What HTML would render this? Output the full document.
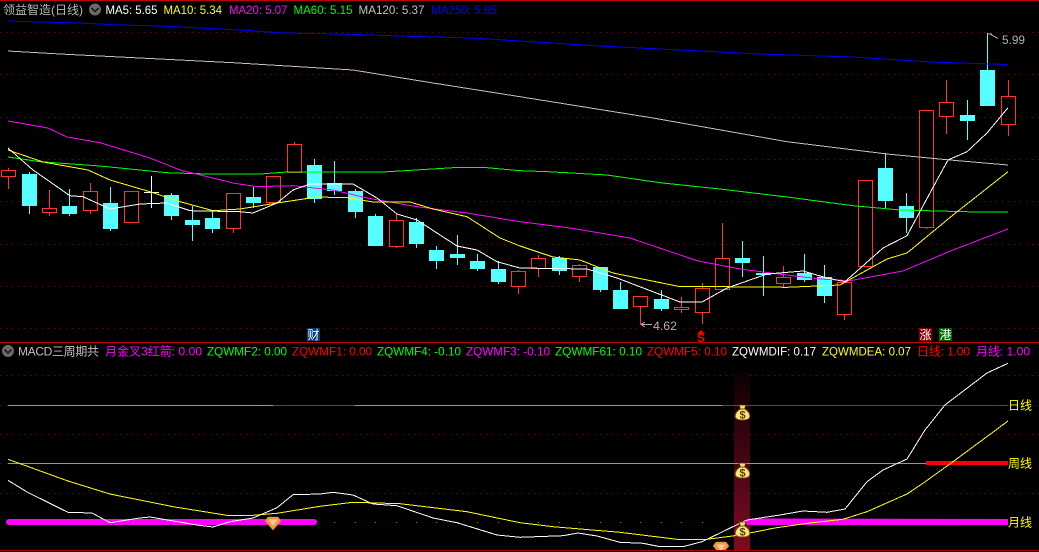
<!DOCTYPE html>
<html><head><meta charset="utf-8">
<style>
html,body{margin:0;padding:0;background:#000;width:1039px;height:552px;overflow:hidden}
svg{display:block}
text{font-family:"Liberation Sans","Noto Sans CJK SC",sans-serif;font-size:12px}
.l{fill:none;stroke-width:1;shape-rendering:crispEdges}
</style></head><body>
<svg width="1039" height="552" viewBox="0 0 1039 552" xmlns="http://www.w3.org/2000/svg">
<defs>
<linearGradient id="col" x1="0" y1="0" x2="0" y2="1"><stop offset="0" stop-color="#0d0003"/><stop offset="1" stop-color="#7f0a22"/></linearGradient>
<g id="bag"><path d="M-3.5 -8L3.5 -8L2 -4L-2 -4Z" fill="#f5e070" stroke="#4a3208" stroke-width=".8"/><path d="M-2 -4L2 -4C5 -2.5 7.3 0.5 7.3 3C7.3 6 4 7 0 7C-4 7 -7.3 6 -7.3 3C-7.3 0.5 -5 -2.5 -2 -4Z" fill="#f8e878" stroke="#7a5c14" stroke-width="1"/><text x="0" y="5.5" text-anchor="middle" style="font-size:11px;font-weight:bold" fill="#6a3020">$</text></g>
<g id="dia"><path d="M-5 -6L5 -6L8 -2L0 7L-8 -2Z" fill="#ee9c48" stroke="#b87838" stroke-width=".6"/><path d="M-4.5 -3.5L4.5 -3.5L0 3Z" fill="#ffc888"/></g>
</defs>
<rect width="1039" height="552" fill="#000"/>
<!-- rules -->
<rect x="0" y="0" width="1039" height="1" fill="#c00000"/>
<rect x="0" y="342" width="1039" height="1" fill="#c00000"/>
<!-- dotted grid -->
<path class="l" stroke="#780000" stroke-dasharray="1 5" d="M0 32.5H1039M0 74.5H1039M0 117.5H1039M0 159.5H1039M0 201.5H1039M0 244.5H1039M0 286.5H1039M0 328.5H1039M0 375.5H1039M0 405.5H8M0 434.5H1039M0 463.5H8M0 493.5H1039M1010 405.5H1039"/>
<!-- upper cyan candles -->
<path class="l" stroke="#55ffff" d="M29.5 172V214M69.5 189V216M110.5 187V231M171.5 193V220M192.5 206V241M212.5 210V233M253.5 187V208M314.5 159V203M334.5 161V195M355.5 189V218M375.5 214V246M416.5 218V248M436.5 246V269M457.5 235V265M477.5 254V271M498.5 261V284M559.5 256V275M600.5 267V292M620.5 282V309M661.5 290V311M742.5 241V277M763.5 256V296M804.5 254V282M824.5 265V303M885.5 153V208M906.5 193V233M967.5 100V140M987.5 33V106"/>
<path fill="#55ffff" shape-rendering="crispEdges" d="M22 174h15v32h-15zM62 206h15v8h-15zM103 203h15v26h-15zM164 195h15v21h-15zM185 220h15v5h-15zM205 218h15v11h-15zM246 197h15v6h-15zM307 165h15v34h-15zM327 183h15v8h-15zM348 191h15v21h-15zM368 216h15v30h-15zM409 222h15v22h-15zM429 250h15v11h-15zM450 254h15v4h-15zM470 261h15v8h-15zM491 269h15v13h-15zM552 258h15v13h-15zM593 267h15v23h-15zM613 290h15v19h-15zM654 299h15v10h-15zM735 258h15v5h-15zM756 273h15v2h-15zM797 273h15v7h-15zM817 277h15v19h-15zM878 168h15v33h-15zM899 206h15v12h-15zM960 115h15v6h-15zM980 70h15v36h-15z"/>
<!-- white doji -->
<path class="l" stroke="#ffffff" d="M151.5 176V208M144 192.5H159"/>
<!-- upper red candles -->
<path class="l" stroke="#ff3232" d="M8.5 168V189M49.5 190V216M90.5 183V214M233.5 228V233M273.5 202V205M294.5 142V173M396.5 214V248M518.5 270V294M538.5 255V277M579.5 264V282M640.5 306V325M681.5 297V313M702.5 283V324M722.5 223V292M783.5 266V288M844.5 314V320M926.5 227V229M946.5 80V134M1008.5 80V136"/>
<path fill="#000" stroke="#ff3232" shape-rendering="crispEdges" d="M1.5 170.5h14v6h-14zM42.5 208.5h14v4h-14zM83.5 191.5h14v19h-14zM124.5 191.5h14v31h-14zM226.5 193.5h14v35h-14zM266.5 176.5h14v26h-14zM287.5 144.5h14v28h-14zM389.5 220.5h14v26h-14zM511.5 271.5h14v15h-14zM531.5 258.5h14v10h-14zM572.5 265.5h14v11h-14zM633.5 296.5h14v10h-14zM674.5 307.5h14v2h-14zM695.5 288.5h14v24h-14zM715.5 258.5h14v31h-14zM776.5 277.5h14v6h-14zM837.5 282.5h14v32h-14zM858.5 180.5h14v86h-14zM919.5 110.5h14v117h-14zM939.5 102.5h14v14h-14zM1001.5 96.5h14v28h-14z"/>
<!-- MA lines -->
<polyline class="l" stroke="#0000ff" points="8,21 40,22 80,23 120,25 160,26 200,28 240,30 283,33 340,34 400,36 470,38 520,41 600,46 680,50 760,54 853,57 930,62 1008,64.5"/>
<polyline class="l" stroke="#c0c0c0" points="8,51 60,54 160,59 233,62.7 353,70 433,83 520,96.7 653,118 787,141.7 887,154 950,160 1008,165"/>
<polyline class="l" stroke="#00ff00" points="8,157 40,161.7 100,166 167,172.7 207,174 260,174 287,172 383,172 453,167.7 487,167.7 520,170.7 548,171.7 607,175 660,182.7 720,189 787,197 853,205.7 900,210 977,212 1008,212"/>
<polyline class="l" stroke="#ff00ff" points="8,121 48,128 67,137 100,142.7 150,158 180,170 233,183 257,186.7 293,185.7 333,190 367,198 417,206.7 467,213 520,221.7 570,228 630,238 697,260.7 740,269 787,275 820,279 850,280.7 903,271 953,250 1008,229"/>
<polyline class="l" stroke="#ffff00" points="8,150 43,162 88,170 110,180 150,191.7 180,201.7 213,210.7 240,209 277,203 317,197 347,197.7 373,202 410,202 433,209 467,216.7 500,238 520,246 553,257 580,260 613,273 680,286.7 723,286.7 787,287.3 840,285 887,259 907,253 953,215 1008,171.7"/>
<polyline class="l" stroke="#ffffff" points="8,148 33,170 70,195.7 83,196.7 110,209 140,204 167,203 190,210.7 240,211.7 253,213 277,203 293,190 310,184 353,184 377,198 397,214 417,220 457,246 477,250 497,261.7 520,268 587,269 617,278 680,302 702,302 727,288 767,274 803,271 827,278 845,281.7 883,248 907,235.7 937,180 948,160 967,151.7 987,133 1008,107.7"/>
<!-- high/low marks -->
<path class="l" stroke="#b0b0b0" d="M987 34H992M990 34L998 38.5M641 324.5H652M641 324.5L645 322M641 324.5L645 327"/>
<text x="1002" y="44" fill="#b0b0b0" textLength="23" lengthAdjust="spacingAndGlyphs">5.99</text>
<text x="653" y="330" fill="#b0b0b0" textLength="24" lengthAdjust="spacingAndGlyphs">4.62</text>
<!-- event markers -->
<rect x="307" y="328" width="13" height="13" fill="#0a3c70"/><text x="307.5" y="339" fill="#fff">财</text>
<rect x="919" y="328" width="13" height="13" fill="#800000"/><text x="919.5" y="339" fill="#fff">涨</text>
<rect x="939" y="328" width="13" height="13" fill="#006400"/><text x="939.5" y="339" fill="#fff">港</text>
<path d="M701 330L705 334H697Z" fill="#ff0000"/><text x="701" y="342" text-anchor="middle" fill="#ff0000" style="font-size:12px;font-weight:bold">S</text>
<!-- legend top -->
<text x="3" y="14" fill="#b8b8b8" textLength="80" lengthAdjust="spacing">领益智造(日线)</text>
<circle cx="95" cy="9.5" r="6" fill="#6a6a6a"/><path d="M91.5 8L95 11.5L98.5 8" fill="none" stroke="#111" stroke-width="1.5"/>
<text x="105.5" y="14" fill="#ffffff" textLength="52" lengthAdjust="spacingAndGlyphs">MA5: 5.65</text>
<text x="163.5" y="14" fill="#ffff00" textLength="58.5" lengthAdjust="spacingAndGlyphs">MA10: 5.34</text>
<text x="229" y="14" fill="#ff00ff" textLength="58.5" lengthAdjust="spacingAndGlyphs">MA20: 5.07</text>
<text x="293.5" y="14" fill="#00ff00" textLength="59" lengthAdjust="spacingAndGlyphs">MA60: 5.15</text>
<text x="358.5" y="14" fill="#c0c0c0" textLength="66" lengthAdjust="spacingAndGlyphs">MA120: 5.37</text>
<text x="431" y="14" fill="#0000ff" textLength="66" lengthAdjust="spacingAndGlyphs">MA250: 5.85</text>
<!-- lower panel -->
<rect x="734" y="373" width="16" height="177" fill="url(#col)"/>
<path class="l" stroke="#00ff00" d="M8 405.5H273M355 405.5H722M8 463.5H926"/>
<path class="l" stroke="#ff0000" d="M273 405.5H355M722 405.5H1008"/>
<rect x="926" y="461" width="82" height="4" fill="#ff0000"/>
<rect x="6" y="519" width="311" height="6" rx="3" fill="#ff00ff"/>
<path d="M745 522L750 518.5L1008 519V525H747Z" fill="#ff00ff"/>
<path fill="#00d000" shape-rendering="crispEdges" d="M334 522h1v1h-1zM355 522h1v1h-1zM375 522h1v1h-1zM396 522h1v1h-1zM416 522h1v1h-1zM436 522h1v1h-1zM457 522h1v1h-1zM477 522h1v1h-1zM498 522h1v1h-1zM518 522h1v1h-1zM538 522h1v1h-1zM559 522h1v1h-1zM579 522h1v1h-1zM600 522h1v1h-1zM620 522h1v1h-1zM640 522h1v1h-1zM661 522h1v1h-1zM681 522h1v1h-1zM702 522h1v1h-1z"/>
<polyline class="l" stroke="#ffff00" points="8,459.3 68,481 110,494 173,506.7 227,515.3 253,515.3 277,513.3 320,506.3 353,502.3 400,503.7 467,511.7 520,522.7 553,526.7 620,532.3 677,539.3 707,539.3 740,535 773,528.3 807,523.3 843,519.3 867,511.7 907,494 923,483.3 953,461.7 1008,421"/>
<polyline class="l" stroke="#ffffff" points="8,480.3 27,492 68,512.3 92,513 110,522.7 140,518 150,517 197,525 213,527 230,521.7 253,518 277,507.7 293,494.7 320,494 333,492.3 353,495 373,504 397,505.7 433,518 457,522.7 497,535 520,537.3 563,535.7 578,533 597,536 620,542.3 643,543.3 660,546.7 683,546.7 702,541.7 740,523.3 747,520 780,515 803,511 827,512.3 845,509 867,481.7 883,470 907,459 925,430 945,405 987,373 1008,363.3"/>
<use href="#bag" x="742.5" y="413"/>
<use href="#bag" x="742.5" y="471"/>
<use href="#bag" x="742.5" y="530"/>
<use href="#dia" x="273" y="523"/>
<use href="#dia" x="721" y="548"/>
<rect x="0" y="550" width="1039" height="2" fill="#000"/>
<rect x="0" y="550" width="1039" height="1" fill="#b00000"/>
<text x="1008" y="409.5" fill="#ffff00">日线</text>
<text x="1008" y="467.5" fill="#ffff00">周线</text>
<text x="1008" y="526.5" fill="#ffff00">月线</text>
<!-- legend lower -->
<circle cx="8" cy="351" r="6" fill="#6a6a6a"/><path d="M4.5 349.5L8 353L11.5 349.5" fill="none" stroke="#111" stroke-width="1.5"/>
<text x="18" y="355.5" fill="#c0c0c0" textLength="81" lengthAdjust="spacing">MACD三周期共</text>
<text x="105" y="355.5" fill="#ff00ff" textLength="97" lengthAdjust="spacing">月金叉3红箭: 0.00</text>
<text x="207" y="355.5" fill="#00ff00" textLength="80" lengthAdjust="spacingAndGlyphs">ZQWMF2: 0.00</text>
<text x="292" y="355.5" fill="#ff0000" textLength="80" lengthAdjust="spacingAndGlyphs">ZQWMF1: 0.00</text>
<text x="377" y="355.5" fill="#00ff00" textLength="84" lengthAdjust="spacingAndGlyphs">ZQWMF4: -0.10</text>
<text x="466" y="355.5" fill="#ff00ff" textLength="84" lengthAdjust="spacingAndGlyphs">ZQWMF3: -0.10</text>
<text x="555" y="355.5" fill="#00ff00" textLength="87" lengthAdjust="spacingAndGlyphs">ZQWMF61: 0.10</text>
<text x="647" y="355.5" fill="#ff0000" textLength="80" lengthAdjust="spacingAndGlyphs">ZQWMF5: 0.10</text>
<text x="732" y="355.5" fill="#ffffff" textLength="84" lengthAdjust="spacingAndGlyphs">ZQWMDIF: 0.17</text>
<text x="822" y="355.5" fill="#ffff00" textLength="89" lengthAdjust="spacingAndGlyphs">ZQWMDEA: 0.07</text>
<text x="917" y="355.5" fill="#ff0000" textLength="53" lengthAdjust="spacing">日线: 1.00</text>
<text x="976" y="355.5" fill="#ff00ff" textLength="54" lengthAdjust="spacing">月线: 1.00</text>
</svg>
</body></html>
